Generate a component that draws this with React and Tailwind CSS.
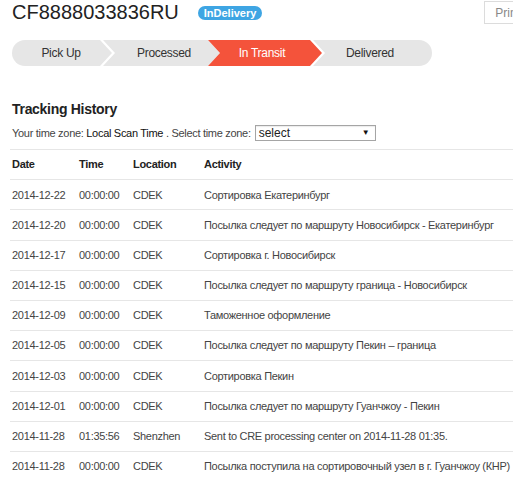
import React from "react";

const rows = [
  ["2014-12-22", "00:00:00", "CDEK", "Сортировка Екатеринбург"],
  ["2014-12-20", "00:00:00", "CDEK", "Посылка следует по маршруту Новосибирск - Екатеринбург"],
  ["2014-12-17", "00:00:00", "CDEK", "Сортировка г. Новосибирск"],
  ["2014-12-15", "00:00:00", "CDEK", "Посылка следует по маршруту граница - Новосибирск"],
  ["2014-12-09", "00:00:00", "CDEK", "Таможенное оформление"],
  ["2014-12-05", "00:00:00", "CDEK", "Посылка следует по маршруту Пекин – граница"],
  ["2014-12-03", "00:00:00", "CDEK", "Сортировка Пекин"],
  ["2014-12-01", "00:00:00", "CDEK", "Посылка следует по маршруту Гуанчжоу - Пекин"],
  ["2014-11-28", "01:35:56", "Shenzhen", "Sent to CRE processing center on 2014-11-28 01:35."],
  ["2014-11-28", "00:00:00", "CDEK", "Посылка поступила на сортировочный узел в г. Гуанчжоу (КНР)"],
];

function Row({ cells, header }) {
  return (
    <div
      className={
        "flex h-[30.2px] items-center border-t border-[#e6e6e6] pl-[2px] text-[11px] tracking-[-0.3px] whitespace-nowrap " +
        (header ? "font-bold text-[#222]" : "text-[#444]")
      }
    >
      <div className="w-[67px] shrink-0">{cells[0]}</div>
      <div className="w-[54px] shrink-0">{cells[1]}</div>
      <div className="w-[71px] shrink-0">{cells[2]}</div>
      <div className="shrink-0">{cells[3]}</div>
    </div>
  );
}

export default function App() {
  return (
    <div className="w-[513px] h-[480px] overflow-hidden bg-white font-['Liberation_Sans',Arial,sans-serif]">
      <div className="w-[545px] pl-[12px] pr-[14px]">
        {/* Title row */}
        <div className="flex h-[24px] items-start justify-between">
          <div className="flex h-[24px] items-center">
            <span className="text-[20px] leading-[24px] text-[#222]">CF8888033836RU</span>
            <span className="ml-[19px] mt-[1px] h-[14px] rounded-full bg-[#3ea5e3] px-[6px] text-[11px] font-bold leading-[14px] text-white">
              InDelivery
            </span>
          </div>
          <div className="mt-[1px] flex h-[23px] items-center border border-[#dcdcdc] px-[10px] text-[12px] text-[#888]">
            Print
          </div>
        </div>

        {/* Progress */}
        <div className="mt-[16px] flex h-[26px] text-[12px] tracking-[-0.3px] text-[#333]">
          <div className="flex w-[100px] items-center justify-center rounded-l-full bg-[#e6e6e6] pr-[2px] [clip-path:polygon(0_0,calc(100%_-_12px)_0,100%_50%,calc(100%_-_12px)_100%,0_100%)]">
            Pick Up
          </div>
          <div className="-ml-[9px] flex w-[117px] items-center justify-center bg-[#e6e6e6] pl-[5px] [clip-path:polygon(0_0,calc(100%_-_12px)_0,100%_50%,calc(100%_-_12px)_100%,0_100%,12px_50%)]">
            Processed
          </div>
          <div className="-ml-[12px] flex w-[114px] items-center justify-center bg-[#f4533b] pr-[6px] text-white [clip-path:polygon(0_0,calc(100%_-_12px)_0,100%_50%,calc(100%_-_12px)_100%,0_100%,12px_50%)]">
            In Transit
          </div>
          <div className="-ml-[9px] flex w-[119px] items-center justify-center rounded-r-full bg-[#e6e6e6] pr-[5px] [clip-path:polygon(0_0,100%_0,100%_100%,0_100%,12px_50%)]">
            Delivered
          </div>
        </div>

        {/* Tracking history */}
        <div className="mt-[34px] text-[14px] font-bold leading-[18px] tracking-[-0.3px] text-[#222]">
          Tracking History
        </div>
        <div className="mt-[7px] flex h-[16px] items-center text-[11px] tracking-[-0.3px] text-[#444] whitespace-nowrap">
          <span>
            Your time zone: <span className="text-[#111]">Local Scan Time</span> . Select time zone:
          </span>
          <div className="ml-[4px] flex h-[16px] w-[121px] items-center justify-between border border-[#a5a5a5] bg-white pl-[3px] pr-[5px] text-[12px] tracking-normal text-[#222] shadow-[inset_0_1px_1px_rgba(0,0,0,0.08)]">
            <span className="leading-[14px]">select</span>
            <span className="text-[8px] leading-[14px] text-[#111]">▼</span>
          </div>
        </div>

        {/* Table */}
        <div className="mt-[8px] -ml-[2px]">
          <Row header cells={["Date", "Time", "Location", "Activity"]} />
          {rows.map((r, i) => (
            <Row key={i} cells={r} />
          ))}
        </div>
      </div>
    </div>
  );
}
